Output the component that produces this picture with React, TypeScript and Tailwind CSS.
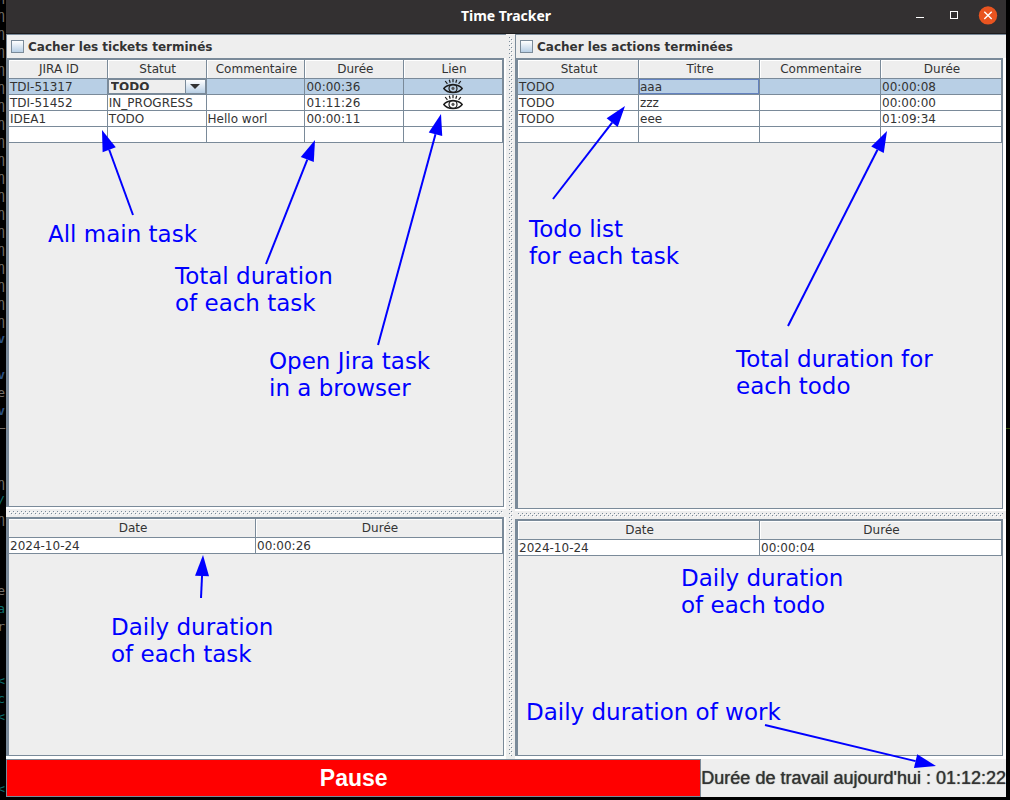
import { ReactNode } from "react";

const GUTTER: [string, string][] = [
  ["η", "g"], ["η", "g"], ["η", "g"], ["η", "g"], ["η", "g"], ["η", "g"],
  ["η", "g"], ["η", "g"], ["η", "g"], ["η", "g"], ["η", "g"], ["η", "g"],
  ["η", "g"], ["η", "g"], ["η", "g"], ["η", "g"], ["η", "g"], ["η", "g"],
  ["η", "g"], ["v", "b"], ["", "g"], ["v", "b"], ["e", "g"], ["v", "b"],
  ["─", "g"], ["", "g"], ["", "g"], ["η", "g"], ["/", "t"], ["η", "g"],
  ["", "g"], ["", "g"], ["", "g"], ["e", "g"], ["a", "t"], ["r", "g"],
  ["", "g"], ["", "g"], ["<", "t"], ["c", "t"], ["<", "t"], ["", "g"],
  ["", "g"], ["", "g"], ["<", "t"],
];

const GUTTER_COLORS: Record<string, string> = {
  g: "text-[#75706a]",
  b: "text-[#2a5080] font-bold",
  t: "text-[#0b6b6b]",
};

function Gutter() {
  return (
    <div
      aria-hidden="true"
      className="flex h-[797px] w-[6px] shrink-0 flex-col items-end overflow-hidden bg-black font-['DejaVu_Sans_Mono',monospace] text-[13px]"
    >
      <div className="-mt-3 pr-px">
        {GUTTER.map(([c, k], i) => (
          <div key={i} className={`flex h-[18px] items-center justify-end leading-[18px] ${GUTTER_COLORS[k]}`}>
            {c}
          </div>
        ))}
      </div>
    </div>
  );
}

function Grip({ id, vertical }: { id: string; vertical?: boolean }) {
  return (
    <div
      role="separator"
      className={
        vertical
          ? "flex w-[9px] shrink-0 justify-center bg-[#eeeeee] py-[3px]"
          : "flex h-[8px] shrink-0 items-center bg-[#eeeeee] px-[3px]"
      }
    >
      <svg className={vertical ? "h-full w-[4px]" : "h-[4px] w-full"}>
        <defs>
          <pattern id={id} width="4" height="4" patternUnits="userSpaceOnUse">
            <rect width="1" height="1" fill="#7a8a99" />
            <rect x="2" y="2" width="1" height="1" fill="#7a8a99" />
            <rect x="1" y="1" width="1" height="1" fill="#fff" />
            <rect x="3" y="3" width="1" height="1" fill="#fff" />
          </pattern>
        </defs>
        <rect width="100%" height="100%" fill={`url(#${id})`} shapeRendering="crispEdges" />
      </svg>
    </div>
  );
}

function EyeIcon() {
  return (
    <svg viewBox="0 0 20 17" className="block h-[17px] w-[20px]" fill="none" stroke="#1c1c1c">
      <path d="M0.8 10.5C4.5 5.4 15.5 5.4 19.2 10.5C15.5 15.8 4.5 15.8 0.8 10.5Z" strokeWidth="1.4" />
      <circle cx="10" cy="10.4" r="4" strokeWidth="1.2" />
      <circle cx="10" cy="10.4" r="1.3" fill="#555" stroke="#555" strokeWidth="0.6" />
      <path d="M10 1V4.2M6.3 1.8L7.2 4.7M13.7 1.8L12.8 4.7M2.2 3L4.4 5.8M17.8 3L15.6 5.8" strokeWidth="1.2" />
    </svg>
  );
}

function HideCheckbox({ id, label }: { id: string; label: string }) {
  return (
    <div className="flex h-[24px] shrink-0 items-center gap-1 border-t border-l border-[#7a8a99] pl-1">
      <input
        id={id}
        type="checkbox"
        className="h-[13px] w-[13px] appearance-none border border-[#7a8a99] bg-linear-to-b from-white to-[#b8cfe5] checked:bg-[#7a8a99]"
      />
      <label htmlFor={id} className="text-[12px] leading-[22px] font-bold">
        {label}
      </label>
    </div>
  );
}

function ScrollPane({ children, className }: { children: ReactNode; className: string }) {
  return (
    <div className={`flex min-h-0 flex-col bg-white ${className}`}>
      <div className="grow border-t-2 border-r border-b border-l-3 border-[#7a8a99] bg-[#eeeeee]">{children}</div>
    </div>
  );
}

function DataTable({
  label,
  head,
  rows,
  selected,
}: {
  label: string;
  head: string[];
  rows: ReactNode[][];
  selected?: boolean;
}) {
  return (
    <table aria-label={label} className="w-full table-fixed border-separate border-spacing-0 text-[12px]">
      <thead>
        <tr>
          {head.map((h) => (
            <th
              key={h}
              className="h-[19px] border-r border-b border-[#7a8a99] p-0 pt-px pl-[2px] text-center leading-[17px] font-normal shadow-[inset_1px_1px_0_#fff]"
            >
              {h}
            </th>
          ))}
        </tr>
      </thead>
      <tbody>
        {rows.map((r, i) => (
          <tr key={i} className={selected && i === 0 ? "bg-[#b8cfe5]" : "bg-white"}>
            {r.map((c, j) => (
              <td key={j} className="h-[16px] border-r border-b border-[#7a8a99] p-0 leading-[17px] whitespace-nowrap">
                {typeof c === "string" ? <div className="h-[15px] pl-px">{c}</div> : c}
              </td>
            ))}
          </tr>
        ))}
      </tbody>
    </table>
  );
}

function StatusSelect() {
  return (
    <div className="flex h-[15px] border border-[#7a8a99] bg-[#eeeeee]">
      <div className="mt-[2px] h-[8px] grow overflow-hidden">
        <select
          aria-label="Statut"
          defaultValue="TODO"
          className="block h-[11px] w-full appearance-none pl-[2px] text-[12px] leading-[11px] font-bold outline-none"
        >
          <option>TODO</option>
          <option>IN_PROGRESS</option>
        </select>
      </div>
      <div className="pointer-events-none flex w-[20px] shrink-0 items-center justify-center border-l border-[#7a8a99] bg-linear-to-b from-white to-[#b8cfe5]">
        <svg viewBox="0 0 10 5" className="h-[5px] w-[10px]">
          <path d="M0 0H10L5 5Z" fill="#333" />
        </svg>
      </div>
    </div>
  );
}

function JiraLink({ ticket }: { ticket: string }) {
  return (
    <a href={`#${ticket}`} aria-label={`Ouvrir ${ticket}`} className="flex h-[15px] items-center justify-center">
      <EyeIcon />
    </a>
  );
}

function Note({ className, children }: { className: string; children: ReactNode }) {
  return <p className={`absolute text-[23px] leading-[27px] whitespace-nowrap text-[#0000ff] ${className}`}>{children}</p>;
}

const ARROWS: [number, number, number, number][] = [
  [133, 215, 102, 130],
  [266, 264, 315, 140],
  [378, 345, 441, 114],
  [553, 199, 625, 106],
  [788, 326, 887, 131],
  [201, 598, 203, 555],
  [765, 725, 936, 766],
];

function Annotations() {
  return (
    <div className="pointer-events-none absolute top-0 left-0">
      <svg width="1010" height="800" className="absolute top-0 left-0 max-w-none" fill="#0000ff" stroke="#0000ff">
        {ARROWS.map(([x1, y1, x2, y2]) => {
          const d = Math.hypot(x2 - x1, y2 - y1);
          const ux = (x2 - x1) / d;
          const uy = (y2 - y1) / d;
          const bx = x2 - ux * 21;
          const by = y2 - uy * 21;
          return (
            <g key={`${x1}-${y1}`}>
              <line x1={x1} y1={y1} x2={bx} y2={by} strokeWidth="2" />
              <polygon
                stroke="none"
                points={`${x2},${y2} ${bx - uy * 7},${by + ux * 7} ${bx + uy * 7},${by - ux * 7}`}
              />
            </g>
          );
        })}
      </svg>
      <Note className="top-[221px] left-[48px]">All main task</Note>
      <Note className="top-[263px] left-[175px]">Total duration<br />of each task</Note>
      <Note className="top-[348px] left-[269px]">Open Jira task<br />in a browser</Note>
      <Note className="top-[216px] left-[529px]">Todo list<br />for each task</Note>
      <Note className="top-[346px] left-[736px]">Total duration for<br />each todo</Note>
      <Note className="top-[614px] left-[111px]">Daily duration<br />of each task</Note>
      <Note className="top-[565px] left-[681px]">Daily duration<br />of each todo</Note>
      <Note className="top-[699px] left-[526px]">Daily duration of work</Note>
    </div>
  );
}

export default function App() {
  return (
    <div className="relative flex min-h-screen overflow-hidden bg-black font-['DejaVu_Sans',sans-serif] text-[#333333]">
      <Gutter />
      <main className="mb-[3px] flex min-w-0 grow flex-col bg-[#eeeeee]">
        <header className="flex h-[34px] shrink-0 items-center border-b border-[#1d1b1c] bg-[#333031] pb-[2px] text-white">
          <div className="flex-1 pl-2" />
          <h1 className="font-['Noto_Sans',sans-serif] text-[14px] leading-5 font-bold">Time Tracker</h1>
          <div className="flex flex-1 items-center justify-end gap-[14px] pr-2">
            <button aria-label="Réduire" className="flex h-5 w-5 items-center justify-center">
              <svg viewBox="0 0 20 20" className="h-5 w-5"><path d="M6 11H14V12H6Z" fill="#fff" /></svg>
            </button>
            <button aria-label="Agrandir" className="flex h-5 w-5 items-center justify-center">
              <svg viewBox="0 0 20 20" className="h-5 w-5"><rect x="6.5" y="5.5" width="7" height="7" fill="none" stroke="#fff" /></svg>
            </button>
            <button aria-label="Fermer" className="flex h-5 w-5 items-center justify-center">
              <svg viewBox="0 0 20 20" className="h-5 w-5">
                <circle cx="10" cy="9.4" r="9.2" fill="#e95420" />
                <path d="M6.3 5.7L13.7 13.1M13.7 5.7L6.3 13.1" stroke="#fff" strokeWidth="1.4" />
              </svg>
            </button>
          </div>
        </header>

        <div className="flex grow">
          <section className="flex min-w-0 flex-[500_1_0] flex-col">
            <HideCheckbox id="hide-tickets" label="Cacher les tickets terminés" />
            <ScrollPane className="flex-[449_1_0] pr-[2px] pb-[2px]">
              <DataTable
                label="Tickets"
                selected
                head={["JIRA ID", "Statut", "Commentaire", "Durée", "Lien"]}
                rows={[
                  ["TDI-51317", <StatusSelect />, "", "00:00:36", <JiraLink ticket="TDI-51317" />],
                  ["TDI-51452", "IN_PROGRESS", "", "01:11:26", <JiraLink ticket="TDI-51452" />],
                  ["IDEA1", "TODO", "Hello worl", "00:00:11", ""],
                  ["", "", "", "", ""],
                ]}
              />
            </ScrollPane>
            <Grip id="grip-left" />
            <ScrollPane className="flex-[239_1_0] pr-[2px] pb-[3px]">
              <DataTable label="Durée du ticket par jour" head={["Date", "Durée"]} rows={[["2024-10-24", "00:00:26"]]} />
            </ScrollPane>
          </section>

          <Grip id="grip-main" vertical />

          <section className="flex min-w-0 flex-[491_1_0] flex-col">
            <HideCheckbox id="hide-actions" label="Cacher les actions terminées" />
            <ScrollPane className="flex-[451_1_0] pr-[3px] pb-[2px]">
              <DataTable
                label="Actions"
                selected
                head={["Statut", "Titre", "Commentaire", "Durée"]}
                rows={[
                  ["TODO", <div className="h-[15px] border border-[#6382bf] leading-[15px]">aaa</div>, "", "00:00:08"],
                  ["TODO", "zzz", "", "00:00:00"],
                  ["TODO", "eee", "", "01:09:34"],
                  ["", "", "", ""],
                ]}
              />
            </ScrollPane>
            <Grip id="grip-right" />
            <ScrollPane className="flex-[237_1_0] pr-[3px] pb-[3px]">
              <DataTable label="Durée de l'action par jour" head={["Date", "Durée"]} rows={[["2024-10-24", "00:00:04"]]} />
            </ScrollPane>
          </section>
        </div>

        <footer className="flex h-[38px] shrink-0 items-center font-['Liberation_Sans',sans-serif]">
          <button className="h-full grow border border-[#7a8a99] bg-[#ff0000] text-[23px] font-bold text-white">Pause</button>
          <p className="text-[18px] whitespace-nowrap text-shadow-[0_0_1px_#333333]">Durée de travail aujourd'hui : 01:12:22</p>
        </footer>
      </main>
      <div aria-hidden="true" className="w-1 shrink-0 pt-[428px]">
        <div className="h-px bg-[#2f4a08]" />
      </div>
      <Annotations />
    </div>
  );
}
